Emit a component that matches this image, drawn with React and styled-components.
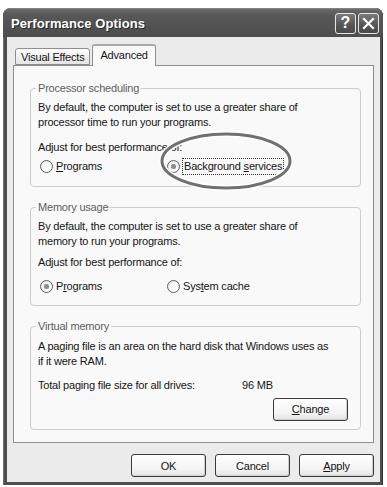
import React from 'react';
import styled, { createGlobalStyle } from 'styled-components';

const Global = createGlobalStyle`
  html, body { margin: 0; padding: 0; background: #ffffff; }
  body {
    font-family: "Liberation Sans", Arial, sans-serif;
    font-size: 11px;
    letter-spacing: -0.2px;
    color: #151515;
  }
  * { box-sizing: border-box; }
`;

const Window = styled.div`
  width: 380px;
  margin: 8px 0 0 3px;
  background: #4f4f4f;
  border-radius: 8px 8px 0 0;
  padding: 0 0 3px 0;
  display: flex;
  flex-direction: column;
  box-shadow: inset 1px 0 0 #6d6d6d, inset -1px 0 0 #333;
`;

const TitleBar = styled.div`
  height: 29px;
  display: flex;
  align-items: center;
  padding: 1px 4px 0 8px;
  border-radius: 8px 8px 0 0;
  background: linear-gradient(#8a8a8a 0px, #666 2px, #575757 8px, #4d4d4d 100%);
`;

const Title = styled.div`
  flex: 1;
  color: #fff;
  font-weight: bold;
  font-size: 13px;
  letter-spacing: 0.1px;
  text-shadow: 1px 1px 0 #2a2a2a;
`;

const CaptionButton = styled.div`
  width: 21px;
  height: 21px;
  margin-left: 2px;
  border: 1px solid #e6e6e6;
  border-radius: 3px;
  background: linear-gradient(#7a7a7a, #555 60%, #4a4a4a);
  color: #fff;
  font-weight: bold;
  font-size: 16px;
  letter-spacing: 0;
  display: flex;
  align-items: center;
  justify-content: center;
`;

const Body = styled.div`
  margin: 0 3px 0 4px;
  background: #ebebeb;
  padding: 7px 6px 5px 6px;
  display: flex;
  flex-direction: column;
`;

const TabStrip = styled.div`
  display: flex;
  align-items: flex-end;
  padding-left: 2px;
  gap: 2px;
  height: 21px;
`;

const Tab = styled.div`
  height: ${(p) => (p.$active ? '22px' : '17px')};
  padding: 0 ${(p) => (p.$active ? '7px' : '5px')};
  border: 1px solid #8f8f8f;
  border-bottom: ${(p) => (p.$active ? 'none' : '1px solid #8f8f8f')};
  border-top: ${(p) => (p.$active ? '2px solid #a9a9a9' : '1px solid #8f8f8f')};
  border-radius: 3px 3px 0 0;
  background: ${(p) => (p.$active ? '#f9f9f9' : 'linear-gradient(#fdfdfd, #e4e4e4)')};
  display: flex;
  align-items: center;
  position: relative;
  z-index: ${(p) => (p.$active ? 1 : 0)};
  margin-bottom: ${(p) => (p.$active ? '-1px' : '0')};
  padding-bottom: ${(p) => (p.$active ? '2px' : '0')};
  white-space: nowrap;
`;

const Panel = styled.div`
  height: 378px;
  border: 1px solid #8e8e8e;
  background: #f9f9f9;
  padding: 22px 12px 12px 16px;
  display: flex;
  flex-direction: column;
  gap: 20px;
`;

const Group = styled.div`
  position: relative;
  height: ${(p) => p.$h}px;
  border: 1px solid #cdcdcd;
  border-radius: 4px;
  padding: ${(p) => p.$pt || 9}px 8px 0 7px;
`;

const Legend = styled.span`
  position: absolute;
  top: -8px;
  left: 5px;
  padding: 0 2px;
  background: #f9f9f9;
  color: #5e5e5e;
  line-height: 14px;
`;

const Para = styled.p`
  margin: 0;
  line-height: 15px;
`;

const Line = styled.div`
  line-height: 15px;
  margin-top: ${(p) => p.$mt || 0}px;
`;

const RadioRow = styled.div`
  display: grid;
  grid-template-columns: 127px auto;
  padding-left: 2px;
  margin-top: ${(p) => p.$mt || 0}px;
  height: 16px;
  align-items: center;
`;

const RadioLabel = styled.label`
  display: flex;
  align-items: center;
  gap: 3px;
  line-height: 15px;
`;

const Circle = styled.span`
  width: 13px;
  height: 13px;
  border-radius: 50%;
  border: 1px solid #5f5f5f;
  background: radial-gradient(circle at 60% 65%, #ffffff 30%, #dcdcdc 100%);
  display: flex;
  align-items: center;
  justify-content: center;
  &::after {
    content: '';
    width: 5px;
    height: 5px;
    border-radius: 50%;
    background: ${(p) => (p.$checked ? '#8c8c8c' : 'transparent')};
    box-shadow: ${(p) => (p.$checked ? '0 0 1px #bbb' : 'none')};
  }
`;

const Focus = styled.span`
  outline: 1px dotted #333;
  outline-offset: 0px;
  padding: 0 1px;
`;

const Key = styled.span`
  text-decoration: underline;
`;

const Ellipse = styled.svg`
  position: absolute;
  left: 127px;
  top: 42px;
  overflow: visible;
  pointer-events: none;
`;

const TotalRow = styled.div`
  display: grid;
  grid-template-columns: 204px auto;
  line-height: 15px;
  margin-top: ${(p) => p.$mt || 0}px;
`;

const ButtonRow = styled.div`
  display: flex;
  justify-content: flex-end;
  gap: 9px;
  margin-top: ${(p) => p.$mt || 0}px;
  padding-right: ${(p) => p.$pr || 0}px;
`;

const Button = styled.button`
  width: 75px;
  height: 23px;
  border: 1px solid #3a3a3a;
  border-radius: 3px;
  background: linear-gradient(#ffffff, #f3f3f3 70%, #e2e2e2);
  box-shadow: inset -1px -1px 0 #cfcfcf;
  font-family: "Liberation Sans", Arial, sans-serif;
  font-size: 11px;
  letter-spacing: -0.2px;
  color: #151515;
  padding: 0;
`;

function Radio({ checked, children }) {
  return (
    <RadioLabel>
      <Circle $checked={checked} />
      {children}
    </RadioLabel>
  );
}

export default function App() {
  return (
    <>
      <Global />
      <Window>
        <TitleBar>
          <Title>Performance Options</Title>
          <CaptionButton>?</CaptionButton>
          <CaptionButton>
            <svg width="13" height="13" viewBox="0 0 13 13">
              <path d="M2 2 L11 11 M11 2 L2 11" stroke="#fff" strokeWidth="2.2" strokeLinecap="square" />
            </svg>
          </CaptionButton>
        </TitleBar>
        <Body>
          <TabStrip>
            <Tab>Visual Effects</Tab>
            <Tab $active>Advanced</Tab>
          </TabStrip>
          <Panel>
            <Group $h={100} $pt={11}>
              <Legend>Processor scheduling</Legend>
              <Para>
                By default, the computer is set to use a greater share of
                <br />
                processor time to run your programs.
              </Para>
              <Line $mt={10}>Adjust for best performance of:</Line>
              <RadioRow $mt={3}>
                <Radio>
                  <span><Key>P</Key>rograms</span>
                </Radio>
                <Radio checked>
                  <Focus>Background <Key>s</Key>ervices</Focus>
                </Radio>
              </RadioRow>
              <Ellipse width="136" height="60" viewBox="0 0 136 60">
                <ellipse cx="68" cy="30" rx="64" ry="27" fill="none" stroke="#ffffff" strokeWidth="6" />
                <ellipse cx="68" cy="30" rx="64" ry="27" fill="none" stroke="#707070" strokeWidth="3" />
              </Ellipse>
            </Group>
            <Group $h={99} $pt={11}>
              <Legend>Memory usage</Legend>
              <Para>
                By default, the computer is set to use a greater share of
                <br />
                memory to run your programs.
              </Para>
              <Line $mt={6}>Adjust for best performance of:</Line>
              <RadioRow $mt={8}>
                <Radio checked>
                  <span>P<Key>r</Key>ograms</span>
                </Radio>
                <Radio>
                  <span>Sys<Key>t</Key>em cache</span>
                </Radio>
              </RadioRow>
            </Group>
            <Group $h={105} $pt={12}>
              <Legend>Virtual memory</Legend>
              <Para>
                A paging file is an area on the hard disk that Windows uses as
                <br />
                if it were RAM.
              </Para>
              <TotalRow $mt={9}>
                <span>Total paging file size for all drives:</span>
                <span>96 MB</span>
              </TotalRow>
              <ButtonRow $mt={5} $pr={4}>
                <Button type="button"><Key>C</Key>hange</Button>
              </ButtonRow>
            </Group>
          </Panel>
          <ButtonRow $mt={11}>
            <Button type="button">OK</Button>
            <Button type="button">Cancel</Button>
            <Button type="button"><Key>A</Key>pply</Button>
          </ButtonRow>
        </Body>
      </Window>
    </>
  );
}
